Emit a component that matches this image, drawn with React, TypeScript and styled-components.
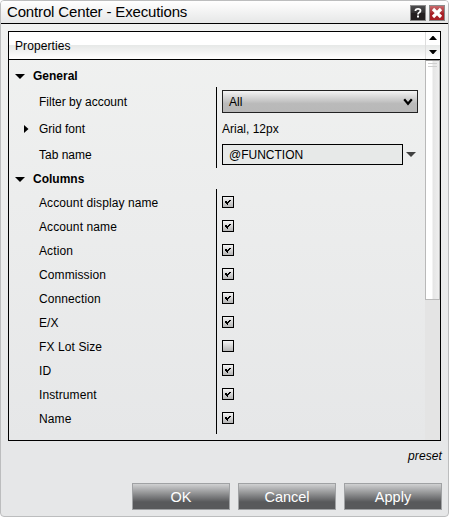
import React, { useState } from "react";
import styled, { createGlobalStyle } from "styled-components";

const Global = createGlobalStyle`
  body { margin: 0; background: #fff; }
  *, *::before, *::after { box-sizing: border-box; }
  button { font: inherit; letter-spacing: inherit; padding: 0; margin: 0; }
`;

const Dialog = styled.div`
  width: 449px;
  height: 517px;
  display: flex;
  flex-direction: column;
  border: 1px solid #bcbdbe;
  border-radius: 4px;
  overflow: hidden;
  background: linear-gradient(#f1f2f1, #e6e7e8 85%);
  font-family: "Liberation Sans", Arial, sans-serif;
  font-size: 12px;
  color: #000;
`;

const TitleBar = styled.header`
  height: 23px;
  flex: none;
  display: flex;
  align-items: center;
  gap: 3px;
  padding: 0 3px 0 6px;
  border-bottom: 1px solid #000;
  background: linear-gradient(#fff, #e6e7e7);
`;

const Title = styled.h1`
  flex: 1;
  margin: 0;
  font-size: 15px;
  line-height: 22px;
  font-weight: normal;
  letter-spacing: -0.15px;
  white-space: nowrap;
`;

const TitleButton = styled.button<{ $danger?: boolean }>`
  width: 16px;
  height: 16px;
  margin-top: 2px;
  border: 1px solid #8b8b8b;
  background: ${(p) =>
    p.$danger
      ? "linear-gradient(#c8696c, #a92b30 50%, #a81e24 51%)"
      : "linear-gradient(#4c4c4e, #302e2f 50%, #231f20 51%)"};
  svg { display: block; }
`;

const Panel = styled.main`
  width: 433px;
  height: 410px;
  flex: none;
  display: flex;
  flex-direction: column;
  margin: 7px 0 0 7px;
  border: 1px solid #000;
`;

const PanelHeader = styled.div`
  height: 28px;
  flex: none;
  display: flex;
  border-bottom: 1px solid #000;
  background: linear-gradient(#fff 0, #fff 13px, #e6e8e7 13px, #fff 27px);
`;

const PanelTitle = styled.div`
  flex: 1;
  padding-left: 6px;
  line-height: 29px;
  letter-spacing: 0.1px;
`;

const Steppers = styled.div`
  width: 15px;
  display: flex;
  flex-direction: column;
  align-items: center;
  gap: 10px;
  padding-top: 4px;
  border-left: 1px solid #ddd;
  svg { display: block; }
`;

const PanelBody = styled.div`
  flex: 1;
  display: flex;
  min-height: 0;
`;

const Properties = styled.div`
  flex: 1;
  padding-top: 4px;
`;

const GroupHeading = styled.div<{ $height: number }>`
  height: ${(p) => p.$height}px;
  display: flex;
  align-items: center;
  padding: 1px 0 0 6px;
  gap: 8px;
  font-weight: bold;
`;

const Group = styled.div<{ $pad?: string }>`
  position: relative;
  padding: ${(p) => p.$pad ?? "0"};
  &::before {
    content: "";
    position: absolute;
    left: 207px;
    top: 0;
    bottom: 0;
    width: 1px;
    background: #000;
  }
`;

const Row = styled.div<{ $height: number }>`
  height: ${(p) => p.$height}px;
  display: grid;
  grid-template-columns: 183px 1fr;
  align-items: center;
  padding-left: 30px;
`;

const Label = styled.span<{ $spaced?: boolean }>`
  display: flex;
  align-items: center;
  padding-top: ${(p) => (p.$spaced ? 2 : 0)}px;
  letter-spacing: ${(p) => (p.$spaced ? 0.1 : 0)}px;
  white-space: nowrap;
`;

const Expander = styled.svg`
  margin: 0 10px 0 -15px;
`;

const Value = styled.div`
  display: flex;
  align-items: center;
`;

const Select = styled.button`
  width: 196px;
  height: 23px;
  display: flex;
  align-items: center;
  justify-content: space-between;
  padding: 0 4px 0 6px;
  border: 1px solid #222;
  background: linear-gradient(#f4f4f4, #bababa 60%, #b8b8b8);
  color: #000;
`;

const TextField = styled.input`
  width: 181px;
  height: 21px;
  margin: 0 3px 0 0;
  padding: 0 6px;
  border: 1px solid #000;
  border-radius: 0;
  background: #e7e9e8;
  font: inherit;
  color: #000;
  outline: none;
`;

const CheckBox = styled.button`
  width: 12px;
  height: 12px;
  border: 1px solid #000;
  background: linear-gradient(#f4f4f4, #b5b5b5);
  svg { display: block; }
`;

const ScrollTrack = styled.div`
  width: 15px;
  background: #e4e4e4;
`;

const ScrollThumb = styled.div`
  height: 240px;
  display: flex;
  flex-direction: column;
  align-items: center;
  gap: 2px;
  padding-top: 2px;
  border: 1px solid #b9b9b9;
  border-top-color: #999;
  background: linear-gradient(90deg, #fff 6px, #e5e5e5 7px, #efefef);
`;

const Grip = styled.i`
  width: 9px;
  height: 1px;
  background: #cfcfcf;
`;

const Preset = styled.div`
  height: 42px;
  flex: none;
  padding: 7px 6px 0 0;
  text-align: right;
  font-style: italic;
  letter-spacing: 0.1px;
  line-height: 16px;
`;

const Actions = styled.footer`
  display: flex;
  justify-content: flex-end;
  gap: 8px;
  padding-right: 6px;
`;

const ActionButton = styled.button`
  width: 98px;
  height: 27px;
  border: 1px solid #a0a2a4;
  background: linear-gradient(#d0d1d2, #58595b 72%);
  color: #fff;
  font-size: 14.5px;
`;

const ArrowDown = ({ fill = "#000" }: { fill?: string }) => (
  <svg width="10" height="5" viewBox="0 0 10 5">
    <path d="M0 0H10L5 5Z" fill={fill} />
  </svg>
);

const Step = ({ up }: { up?: boolean }) => (
  <svg width="8" height="4" viewBox="0 0 8 4">
    <path d={up ? "M0 4H8L4.5 0H3.5Z" : "M0 0H8L4.5 4H3.5Z"} />
  </svg>
);

const Tick = () => (
  <svg width="10" height="10" viewBox="0 0 10 10" shapeRendering="crispEdges">
    <path d="M2 4h2v1h1v-1h1v-1h2v1h-1v1h-1v1h-1v2h-1v-1h-1v-1h-1z" />
  </svg>
);

const initialColumns: [string, boolean][] = [
  ["Account display name", true],
  ["Account name", true],
  ["Action", true],
  ["Commission", true],
  ["Connection", true],
  ["E/X", true],
  ["FX Lot Size", false],
  ["ID", true],
  ["Instrument", true],
  ["Name", true],
];

export default function App() {
  const [columns, setColumns] = useState(initialColumns);
  const [tabName, setTabName] = useState("@FUNCTION");
  const toggle = (name: string) =>
    setColumns((list) => list.map(([n, on]) => [n, n === name ? !on : on]));

  return (
    <>
      <Global />
      <Dialog>
        <TitleBar>
          <Title>Control Center - Executions</Title>
          <TitleButton aria-label="Help">
            <svg width="14" height="14" viewBox="0 0 14 14">
              <path d="M4.5 5V4.2Q4.8 2.8 7 2.8Q9.5 2.8 9.5 4.7Q9.5 5.7 8.2 6.5Q7 7.2 7 8.5" fill="none" stroke="#fff" strokeWidth="1.8" />
              <path d="M6 9.5h2v2H6z" fill="#fff" />
            </svg>
          </TitleButton>
          <TitleButton $danger aria-label="Close">
            <svg width="14" height="14" viewBox="0 0 14 14">
              <path d="M3 3L11 11M11 3L3 11" stroke="#fff" strokeWidth="3.2" />
            </svg>
          </TitleButton>
        </TitleBar>
        <Panel>
          <PanelHeader>
            <PanelTitle>Properties</PanelTitle>
            <Steppers>
              <Step up />
              <Step />
            </Steppers>
          </PanelHeader>
          <PanelBody>
            <Properties>
              <GroupHeading $height={23}>
                <ArrowDown />
                General
              </GroupHeading>
              <Group>
                <Row $height={29}>
                  <Label>Filter by account</Label>
                  <Value>
                    <Select>
                      All
                      <svg width="10" height="8" viewBox="0 0 10 8">
                        <path d="M1.2 1.2L5 5.8L8.8 1.2" fill="none" stroke="#000" strokeWidth="2.2" />
                      </svg>
                    </Select>
                  </Value>
                </Row>
                <Row $height={25}>
                  <Label>
                    <Expander width="5" height="8" viewBox="0 0 5 8">
                      <path d="M0 0L4.5 4L0 8Z" />
                    </Expander>
                    Grid font
                  </Label>
                  <Value>Arial, 12px</Value>
                </Row>
                <Row $height={27}>
                  <Label>Tab name</Label>
                  <Value>
                    <TextField value={tabName} onChange={(e) => setTabName(e.target.value)} />
                    <ArrowDown fill="#414141" />
                  </Value>
                </Row>
              </Group>
              <GroupHeading $height={21}>
                <ArrowDown />
                Columns
              </GroupHeading>
              <Group $pad="1px 0 4px">
                {columns.map(([name, on]) => (
                  <Row key={name} $height={24}>
                    <Label $spaced>{name}</Label>
                    <Value>
                      <CheckBox role="checkbox" aria-checked={on} aria-label={name} onClick={() => toggle(name)}>
                        {on && <Tick />}
                      </CheckBox>
                    </Value>
                  </Row>
                ))}
              </Group>
            </Properties>
            <ScrollTrack>
              <ScrollThumb>
                <Grip />
                <Grip />
              </ScrollThumb>
            </ScrollTrack>
          </PanelBody>
        </Panel>
        <Preset>preset</Preset>
        <Actions>
          <ActionButton>OK</ActionButton>
          <ActionButton>Cancel</ActionButton>
          <ActionButton>Apply</ActionButton>
        </Actions>
      </Dialog>
    </>
  );
}
